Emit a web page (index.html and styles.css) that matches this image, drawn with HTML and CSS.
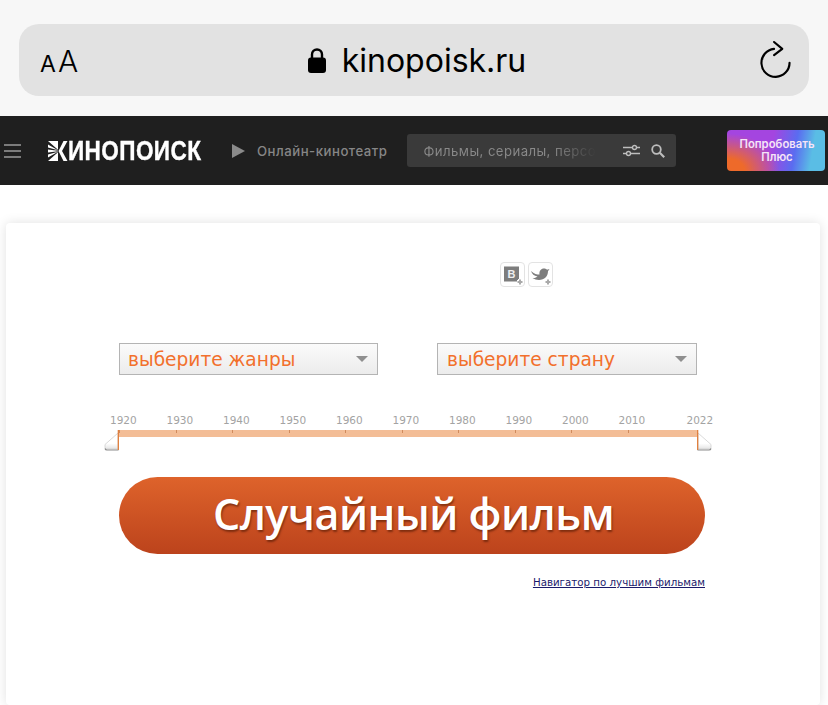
FILE: index.html
```html
<!DOCTYPE html>
<html lang="ru">
<head>
    <meta charset="UTF-8">
    <meta name="viewport" content="width=device-width, initial-scale=1.0">
    <title>Случайный фильм</title>
    <link rel="stylesheet" href="styles.css">
</head>
<body>
    <div class="browser-bar">
        <div class="address">
            <span class="text-size"><span class="small-a">A</span>A</span>
            <div class="url">
                <svg class="lock" viewBox="0 0 18 26" width="18" height="26">
                    <path d="M4 12V7.5a5 5 0 0 1 10 0V12" fill="none" stroke="#000" stroke-width="2.4"/>
                    <rect x="0" y="10.5" width="18" height="15.5" rx="3" fill="#000"/>
                </svg>
                <span>kinopoisk.ru</span>
            </div>
            <svg class="reload" viewBox="0 0 32 38" width="32" height="38">
                <path d="M30.5 23A14.5 14.5 0 1 1 14.5 8.5" fill="none" stroke="#000" stroke-width="2.2" stroke-linecap="round"/>
                <path d="M14.5 1.5L23 8.5L14.5 15" fill="none" stroke="#000" stroke-width="2.2" stroke-linecap="round" stroke-linejoin="round"/>
            </svg>
        </div>
    </div>

    <header class="site-header">
        <div class="burger"><i></i><i></i><i></i></div>
        <div class="logo">
            <svg class="logo-mark" viewBox="0 0 20 20" width="20" height="20">
                <path d="M0 0L10 8.800V0zM0 20L10 11.200V20zM0 3.500L10 9.300L0 6.500zM0 8.500L10 9.800V10.200L0 11.500zM0 13.500L10 10.700L0 16.500z" fill="#fff"/>
                <path d="M10.500 10L15.500 0H19.500L14 10L19.500 20H15.500z" fill="#fff"/>
            </svg>
            <span class="logo-text">ИНОПОИСК</span>
        </div>
        <div class="online">
            <svg viewBox="0 0 13 14" width="13" height="14"><path d="M0 0L13 7L0 14z" fill="#8a8a8a"/></svg>
            <span>Онлайн-кинотеатр</span>
        </div>
        <div class="search">
            <span class="placeholder">Фильмы, сериалы, персо</span>
            <svg class="filter-icon" viewBox="0 0 17 13" width="17" height="13">
                <path d="M0 3.500H9.500M13.500 3.500H17M0 9.500H3.500M7.500 9.500H17" stroke="#bdbdbd" stroke-width="1.400" fill="none"/>
                <circle cx="11.500" cy="3.500" r="2" fill="none" stroke="#bdbdbd" stroke-width="1.400"/>
                <circle cx="5.500" cy="9.500" r="2" fill="none" stroke="#bdbdbd" stroke-width="1.400"/>
            </svg>
            <svg class="search-icon" viewBox="0 0 14 14" width="14" height="14">
                <circle cx="5.500" cy="5.500" r="4.300" fill="none" stroke="#bdbdbd" stroke-width="1.800"/>
                <path d="M8.800 8.800L13.200 13.200" stroke="#bdbdbd" stroke-width="2.200"/>
            </svg>
        </div>
        <div class="plus-btn">Попробовать<br>Плюс</div>
    </header>

    <main class="card">
        <div class="share">
            <div class="share-btn">
                <svg viewBox="0 0 23 23" width="23" height="23">
                    <rect x="3" y="3.500" width="15" height="15" fill="#7d7d7d"/>
                    <text x="10.500" y="15" class="vk-letter">В</text>
                    <path d="M16 19h6M19 16v6" stroke="#fff" stroke-width="4"/>
                    <path d="M16.500 19h5M19 16.500v5" stroke="#aaa" stroke-width="2"/>
                </svg>
            </div>
            <div class="share-btn">
                <svg viewBox="0 0 23 23" width="23" height="23">
                    <path d="M2 8C5 11 8 11.500 10.500 11.500C10 8 12 5.500 15 5.500C16.500 5.500 17.500 6.200 18 6.800L20.500 6L19 8.200C19 13 15.500 17 10 17C7.500 17 5.500 16.300 3.500 15C6 15.200 7.500 14.500 8.500 13.500C5 13 3 11 2 8z" fill="#7d7d7d"/>
                    <path d="M16 19h6M19 16v6" stroke="#fff" stroke-width="4"/>
                    <path d="M16.500 19h5M19 16.500v5" stroke="#aaa" stroke-width="2"/>
                </svg>
            </div>
        </div>

        <div class="selects">
            <div class="select">выберите жанры<i class="caret"></i></div>
            <div class="select wide">выберите страну<i class="caret"></i></div>
        </div>

        <div class="years">
            <span>1920</span><span>1930</span><span>1940</span><span>1950</span><span>1960</span>
            <span>1970</span><span>1980</span><span>1990</span><span>2000</span><span class="year-last">2010</span><span>2022</span>
        </div>
        <div class="slider">
            <div class="track">
                <i></i><i></i><i></i><i></i><i></i><i></i><i></i><i></i><i></i><i></i>
            </div>
            <svg class="thumb thumb-left" viewBox="0 0 15 21" width="15" height="21">
                <defs>
                    <linearGradient id="thumbFill" x1="0" y1="0" x2="0" y2="1">
                        <stop offset="0.65" stop-color="#fff"/>
                        <stop offset="1" stop-color="#e4e4e4"/>
                    </linearGradient>
                </defs>
                <path d="M14 3V19H2.500Q1 19 1 17.500V14.500z" fill="url(#thumbFill)" stroke="#cfcfcf" stroke-width=".8"/>
                <path d="M1 18.500Q1.500 20 3 20H14.500" fill="none" stroke="#8c8c8c" stroke-width="1.200"/>
                <path d="M14.400 0V20" stroke="#e0803f" stroke-width="1.400"/>
            </svg>
            <svg class="thumb thumb-right" viewBox="0 0 15 21" width="15" height="21">
                <path d="M1 3V19H12.500Q14 19 14 17.500V14.500z" fill="url(#thumbFill)" stroke="#cfcfcf" stroke-width=".8"/>
                <path d="M14 18.500Q13.500 20 12 20H.500" fill="none" stroke="#8c8c8c" stroke-width="1.200"/>
                <path d="M.600 0V20" stroke="#e0803f" stroke-width="1.400"/>
            </svg>
        </div>

        <div class="random-btn">Случайный фильм</div>
        <div class="nav-link"><a href="#">Навигатор по лучшим фильмам</a></div>
    </main>
</body>
</html>
```

FILE: styles.css
```css
html, body {
    height: 100%;
    margin: 0;
    overflow: hidden;
}
body {
    display: flex;
    flex-direction: column;
    background-color: #fff;
    font-family: "DejaVu Sans", sans-serif;
}

/* browser chrome */
.browser-bar {
    height: 116px;
    padding: 24px 19px 20px;
    box-sizing: border-box;
    background-color: #f7f7f7;
}
.address {
    height: 72px;
    border-radius: 20px;
    background-color: #e2e2e2;
    display: flex;
    align-items: center;
    padding: 0 18px 0 21px;
    color: #000;
    font-family: Inter, sans-serif;
}
.text-size {
    width: 39px;
    font-size: 30px;
    font-weight: 300;
    line-height: 1;
    margin-top: 1px;
    white-space: nowrap;
}
.small-a {
    font-size: 23px;
    font-weight: 400;
    margin-right: 2px;
}
.url {
    flex: 1;
    display: flex;
    align-items: center;
    justify-content: center;
    gap: 16px;
    font-size: 32px;
    margin-right: 5px;
    margin-top: 1px;
}
.lock {
    margin-bottom: 2px;
}
.reload {
    margin-top: -2px;
    width: 31px;
}

/* site header */
.site-header {
    height: 69px;
    flex: none;
    background-color: #1f1f1f;
    display: flex;
    align-items: center;
    font-family: Inter, sans-serif;
}
.burger {
    width: 17px;
    margin-left: 4px;
    display: flex;
    flex-direction: column;
    gap: 4px;
}
.burger i {
    height: 2px;
    background-color: #7b7b7b;
}
.logo {
    display: flex;
    align-items: center;
    margin-left: 27px;
    height: 20px;
}
.logo-text {
    display: block;
    width: 133px;
    color: #fff;
    font-family: "Liberation Sans", sans-serif;
    font-weight: bold;
    font-size: 27.5px;
    line-height: 20px;
    letter-spacing: .5px;
    white-space: nowrap;
    transform: scaleX(.82);
    transform-origin: left center;
    -webkit-text-stroke: .4px #fff;
}
.online {
    display: flex;
    align-items: center;
    gap: 12px;
    margin-left: 31px;
    color: #868686;
    font-size: 13.2px;
    font-weight: 500;
    letter-spacing: .5px;
    white-space: nowrap;
}
.search {
    width: 269px;
    height: 33px;
    box-sizing: border-box;
    margin-left: 20px;
    padding: 0 11px 0 16px;
    border-radius: 3px;
    background-color: #3a3a3a;
    display: flex;
    align-items: center;
    font-size: 13.2px;
    letter-spacing: .42px;
}
.placeholder {
    width: 184px;
    margin-right: 16px;
    white-space: nowrap;
    color: transparent;
    background: linear-gradient(90deg, #8a8a8a 70%, #3a3a3a 94%);
    -webkit-background-clip: text;
    background-clip: text;
}
.search-icon {
    margin-left: 11px;
}
.plus-btn {
    width: 98px;
    height: 41px;
    margin-left: 51px;
    padding-left: 1px;
    box-sizing: border-box;
    border-radius: 4px;
    background:
        radial-gradient(ellipse 70px 50px at 0 100%, #ee6a2a 0, #ee6a2a 25%, rgba(238, 106, 42, 0) 75%),
        linear-gradient(100deg, #a445e0 0, #a445e0 45%, #5a6cf0 68%, #5abde5 85%);
    color: #f6e4f7;
    font-size: 11.3px;
    font-weight: 600;
    line-height: 13px;
    text-align: center;
    display: flex;
    align-items: center;
    justify-content: center;
}

/* main card */
.card {
    flex: 1;
    margin: 38px 8px 0 6px;
    padding: 39px 0 0 113px;
    border-radius: 4px;
    box-shadow: 0 0 12px rgba(0, 0, 0, .12);
    background-color: #fff;
}
.share {
    display: flex;
    gap: 3px;
    margin-left: 381px;
}
.share-btn {
    width: 25px;
    height: 25px;
    box-sizing: border-box;
    border: 1px solid #e3e3e3;
    border-radius: 4px;
}
.share-btn svg {
    display: block;
}
.vk-letter {
    font-family: "Liberation Sans", sans-serif;
    font-size: 11px;
    font-weight: bold;
    fill: #eee;
    text-anchor: middle;
}
.selects {
    display: flex;
    gap: 59px;
    margin-top: 56px;
}
.select {
    width: 259px;
    height: 32px;
    box-sizing: border-box;
    padding-left: 8px;
    border: 1px solid #b4b4b4;
    background: linear-gradient(#fbfbfb, #ececec);
    color: #f2702c;
    font-size: 18.6px;
    line-height: 29px;
    display: flex;
    justify-content: space-between;
    align-items: center;
}
.select.wide {
    width: 260px;
    padding-left: 9px;
}
.caret {
    width: 0;
    height: 0;
    margin-right: 9px;
    border: 6px solid transparent;
    border-top-color: #8f8f8f;
    border-bottom: 0;
}
.years {
    display: flex;
    margin: 39px 0 0 -9px;
    color: #a3a3a3;
    font-size: 10.5px;
    line-height: 13px;
}
.years span {
    width: 56.5px;
    flex: none;
}
.years .year-last {
    width: 68px;
}
.slider {
    position: relative;
    width: 578px;
    margin-top: 3px;
}
.track {
    height: 7px;
    background-color: #f3bd96;
    display: flex;
}
.track i {
    width: 56.5px;
    flex: none;
    box-sizing: border-box;
    height: 3px;
    border-left: 1px solid #d08a5c;
}
.thumb {
    position: absolute;
    top: 0;
}
.thumb-left {
    left: -15px;
}
.thumb-right {
    right: -15px;
}
.random-btn {
    width: 586px;
    height: 77px;
    box-sizing: border-box;
    padding-left: 3px;
    margin-top: 40px;
    border-radius: 39px;
    background: linear-gradient(#de632b, #bc431c);
    color: #fff;
    font-family: "Open Sans", sans-serif;
    font-size: 43px;
    font-weight: 600;
    letter-spacing: -.5px;
    line-height: 73px;
    text-align: center;
    text-shadow: 1px 2px 2px rgba(70, 20, 0, .55);
}
.nav-link {
    width: 586px;
    margin-top: 22px;
    text-align: right;
    font-size: 10.25px;
    line-height: 13px;
}
.nav-link a {
    color: #1a1a6b;
}
```
